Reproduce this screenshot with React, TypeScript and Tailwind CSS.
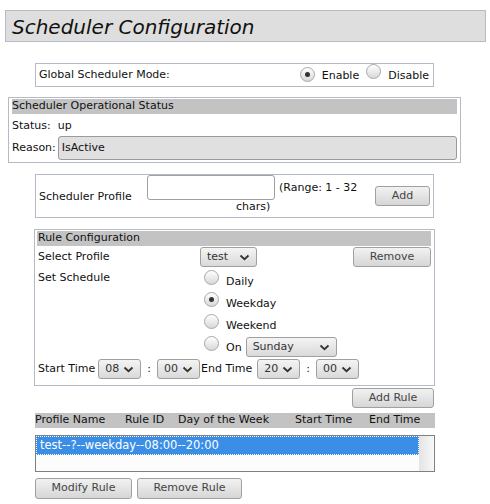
import React from "react";

const font = { fontFamily: '"DejaVu Sans", Verdana, sans-serif' };

function Radio({ checked }: { checked?: boolean }) {
  return (
    <span className="inline-flex items-center justify-center w-[15px] h-[15px] rounded-full border border-[#a8a8a8] bg-gradient-to-b from-[#ffffff] to-[#d8d8d8] shrink-0">
      {checked && <span className="w-[5px] h-[5px] rounded-full bg-[#333]" />}
    </span>
  );
}

function Chevron() {
  return (
    <svg width="11" height="7" viewBox="0 0 11 7" className="shrink-0">
      <path d="M1.5 1.5 L5.5 5.2 L9.5 1.5" fill="none" stroke="#333" strokeWidth="1.8" />
    </svg>
  );
}

function Select({ value, w }: { value: string; w: string }) {
  return (
    <span
      className={`inline-flex items-center justify-between h-[20px] rounded-[3px] border border-[#a0a0a0] bg-gradient-to-b from-[#f4f4f4] to-[#d9d9d9] pl-[6px] pr-[6px] text-[11px] text-[#333] ${w}`}
    >
      <span>{value}</span>
      <Chevron />
    </span>
  );
}

function Button({ label, w, h = "h-[20px]" }: { label: string; w: string; h?: string }) {
  return (
    <span
      className={`inline-flex items-center justify-center ${h} rounded-[3px] border border-[#a0a0a0] bg-gradient-to-b from-[#f2f2f2] to-[#d6d6d6] text-[11px] text-[#444] ${w}`}
    >
      {label}
    </span>
  );
}

export default function App() {
  return (
    <div className="w-[490px] h-[504px] bg-white text-[11px] text-[#111] overflow-hidden pt-[10px]" style={font}>
      {/* Title */}
      <div className="ml-[5px] w-[481px] h-[32px] border border-[#b4bac6] bg-[#dedede] flex items-center pl-[6px] pt-[2px]">
        <span className="italic text-[20px] text-[#111]">Scheduler Configuration</span>
      </div>

      {/* Global Scheduler Mode */}
      <div className="ml-[35px] mt-[21px] w-[399px] h-[24px] border border-[#b4bac6] flex items-center pl-[3px] pr-[3px]">
        <span className="flex-1">Global Scheduler Mode:</span>
        <span className="flex items-center gap-[4px] mt-[2px]">
          <span className="-mt-[4px] -ml-[2px]"><Radio checked /></span>
          <span className="ml-[3px] mr-[3px]">Enable</span>
          <span className="-mt-[4px]"><Radio /></span>
          <span className="ml-[3px] mr-[1px]">Disable</span>
        </span>
      </div>

      {/* Operational status */}
      <div className="ml-[8px] mt-[10px] w-[453px] h-[66px] border border-[#b4bac6] pt-[1px] px-[3px]">
        <div className="h-[15px] bg-[#c3c3c3] flex items-center">Scheduler Operational Status</div>
        <div className="h-[22px] flex items-center pt-[2px]">Status:&nbsp; up</div>
        <div className="flex items-center">
          <span className="mr-[2px]">Reason:</span>
          <span className="flex-1 h-[24px] rounded-[3px] border border-[#9a9a9a] bg-[#e0e0e0] flex items-center pl-[3px]">IsActive</span>
        </div>
      </div>

      {/* Scheduler Profile */}
      <div className="ml-[35px] mt-[11px] w-[399px] h-[44px] border border-[#b4bac6] flex pl-[3px]">
        <span className="w-[108px] mt-[14px]">Scheduler Profile</span>
        <div className="flex flex-col">
          <div className="flex items-start">
            <span className="w-[128px] h-[25px] rounded-[3px] border border-[#a0a0a0] bg-white" />
            <span className="ml-[4px] mt-[5px]">(Range: 1 - 32</span>
          </div>
          <span className="ml-[89px] -mt-[1px]">chars)</span>
        </div>
        <span className="ml-auto mr-[3px] mt-[11px]"><Button label="Add" w="w-[55px]" /></span>
      </div>

      {/* Rule configuration */}
      <div className="ml-[34px] mt-[11px] w-[401px] h-[157px] border border-[#b4bac6] pt-[1px] px-[2px]">
        <div className="h-[15px] bg-[#c3c3c3] flex items-center pl-[1px] mr-[1px]">Rule Configuration</div>
        <div className="flex items-center h-[20px] mt-[1px]">
          <span className="w-[163px] pl-[1px]">Select Profile</span>
          <Select value="test" w="w-[57px]" />
          <span className="ml-auto mr-[1px]"><Button label="Remove" w="w-[78px]" /></span>
        </div>
        <div className="flex mt-[3px]">
          <span className="w-[167px] pl-[1px]">Set Schedule</span>
          <div className="flex flex-col">
            <div className="flex items-start h-[22px]">
              <Radio />
              <span className="ml-[7px] mt-[4px]">Daily</span>
            </div>
            <div className="flex items-start h-[22px]">
              <Radio checked />
              <span className="ml-[7px] mt-[4px]">Weekday</span>
            </div>
            <div className="flex items-start h-[22px]">
              <Radio />
              <span className="ml-[7px] mt-[4px]">Weekend</span>
            </div>
            <div className="flex items-start h-[22px]">
              <Radio />
              <span className="ml-[7px] mt-[4px]">On</span>
              <span className="ml-[4px] mt-[1px]"><Select value="Sunday" w="w-[91px]" /></span>
            </div>
          </div>
        </div>
        <div className="flex items-center h-[20px] mt-[1px]">
          <span className="pl-[1px] mr-[3px]">Start Time</span>
          <Select value="08" w="w-[43px]" />
          <span className="mx-[6px]">:</span>
          <Select value="00" w="w-[43px]" />
          <span className="ml-[1px] mr-[5px]">End Time</span>
          <Select value="20" w="w-[43px]" />
          <span className="mx-[6px]">:</span>
          <Select value="00" w="w-[43px]" />
        </div>
      </div>

      {/* Add Rule */}
      <div className="w-[434px] flex justify-end mt-[2px]">
        <Button label="Add Rule" w="w-[82px]" />
      </div>

      {/* Table header */}
      <div className="ml-[35px] mt-[5px] w-[400px] h-[15px] bg-[#c3c3c3] flex items-center text-[11px]">
        <span className="w-[90px]">Profile Name</span>
        <span className="w-[53px]">Rule ID</span>
        <span className="w-[117px]">Day of the Week</span>
        <span className="w-[74px]">Start Time</span>
        <span>End Time</span>
      </div>

      {/* Listbox */}
      <div className="ml-[35px] mt-[7px] w-[400px] h-[37px] border border-[#808080] bg-[#fcfcfc] flex">
        <div className="flex-1">
          <div className="h-[19px] bg-[#3b8ee6] text-white text-[11.5px] border border-dotted border-white flex items-center pl-[3px]">
            test--?--weekday--08:00--20:00
          </div>
        </div>
        <div className="w-[15px] bg-gradient-to-r from-[#e4e4e4] to-[#f8f8f8]" />
      </div>

      {/* Bottom buttons */}
      <div className="ml-[35px] mt-[6px] flex gap-[5px]">
        <Button label="Modify Rule" w="w-[97px]" h="h-[21px]" />
        <Button label="Remove Rule" w="w-[105px]" h="h-[21px]" />
      </div>
    </div>
  );
}
